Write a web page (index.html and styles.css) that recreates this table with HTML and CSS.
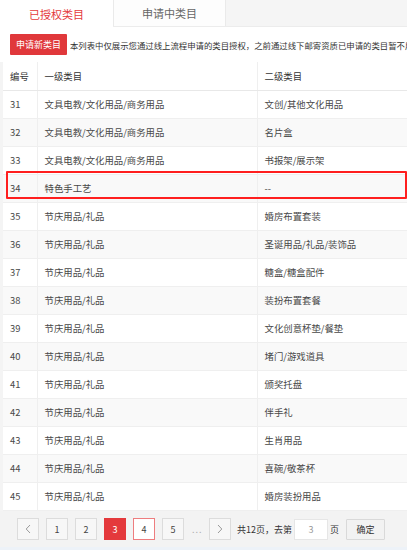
FILE: index.html
```html
<!DOCTYPE html>
<html lang="zh-CN">
<head>
<meta charset="utf-8">
<title>类目管理</title>
<link rel="stylesheet" href="styles.css">
</head>
<body>
<div class="page">
  <div class="tabs">
    <div class="tab tab-active">已授权类目</div>
    <div class="tab">申请中类目</div>
    <div class="tab-fill"></div>
  </div>
  <div class="toolbar">
    <button class="btn-apply">申请新类目</button>
    <p class="notice">本列表中仅展示您通过线上流程申请的类目授权，之前通过线下邮寄资质已申请的类目暂不展示</p>
  </div>
  <div class="table-wrap">
    <table class="cat-table">
      <thead>
        <tr><th class="c-no">编号</th><th class="c-first">一级类目</th><th class="c-second">二级类目</th></tr>
      </thead>
      <tbody>
        <tr><td>31</td><td>文具电教/文化用品/商务用品</td><td>文创/其他文化用品</td></tr>
        <tr><td>32</td><td>文具电教/文化用品/商务用品</td><td>名片盒</td></tr>
        <tr><td>33</td><td>文具电教/文化用品/商务用品</td><td>书报架/展示架</td></tr>
        <tr><td>34</td><td>特色手工艺</td><td>--</td></tr>
        <tr><td>35</td><td>节庆用品/礼品</td><td>婚房布置套装</td></tr>
        <tr><td>36</td><td>节庆用品/礼品</td><td>圣诞用品/礼品/装饰品</td></tr>
        <tr><td>37</td><td>节庆用品/礼品</td><td>糖盒/糖盒配件</td></tr>
        <tr><td>38</td><td>节庆用品/礼品</td><td>装扮布置套餐</td></tr>
        <tr><td>39</td><td>节庆用品/礼品</td><td>文化创意杯垫/餐垫</td></tr>
        <tr><td>40</td><td>节庆用品/礼品</td><td>堵门/游戏道具</td></tr>
        <tr><td>41</td><td>节庆用品/礼品</td><td>颁奖托盘</td></tr>
        <tr><td>42</td><td>节庆用品/礼品</td><td>伴手礼</td></tr>
        <tr><td>43</td><td>节庆用品/礼品</td><td>生肖用品</td></tr>
        <tr><td>44</td><td>节庆用品/礼品</td><td>喜碗/敬茶杯</td></tr>
        <tr><td>45</td><td>节庆用品/礼品</td><td>婚房装扮用品</td></tr>
      </tbody>
    </table>
    <div class="highlight"></div>
  </div>
  <div class="pager">
    <span class="pg-btn pg-arrow"><svg width="6" height="10" viewBox="0 0 6 10"><path d="M5 1 L1.2 5 L5 9" fill="none" stroke="#9a9a9a" stroke-width="1"/></svg></span>
    <span class="pg-btn">1</span>
    <span class="pg-btn">2</span>
    <span class="pg-btn pg-current">3</span>
    <span class="pg-btn pg-next">4</span>
    <span class="pg-btn">5</span>
    <span class="pg-dots">...</span>
    <span class="pg-btn pg-arrow"><svg width="6" height="10" viewBox="0 0 6 10"><path d="M1 1 L4.8 5 L1 9" fill="none" stroke="#9a9a9a" stroke-width="1"/></svg></span>
    <span class="pg-text">共12页，去第</span>
    <span class="pg-input">3</span>
    <span class="pg-text pg-unit">页</span>
    <span class="pg-ok">确定</span>
  </div>
  <div class="bottom-band"></div>
</div>
</body>
</html>
```
FILE: styles.css
```css
* { box-sizing: border-box; }

html, body {
  margin: 0;
  padding: 0;
}

body {
  background: #f4f4f4;
  font-family: "Noto Sans CJK SC", "Noto Sans", sans-serif;
  color: #333;
  width: 407px;
  height: 550px;
  overflow: hidden;
}

.page {
  display: flex;
  flex-direction: column;
  width: 407px;
}

/* Tabs */
.tabs {
  display: flex;
  height: 27px;
  border-bottom: 1px solid #ececec;
  background: #f5f5f5;
}

.tab {
  width: 113px;
  height: 26px;
  display: flex;
  align-items: center;
  justify-content: center;
  font-size: 11px;
  color: #666;
  background: #fdfdfd;
  border-left: 1px solid #eaeaea;
  border-right: 1px solid #eaeaea;
}

.tab-active {
  color: #e4393c;
  background: #fff;
  border-left: none;
  border-right: none;
  height: 27px;
  margin-bottom: -1px;
}

.tab-fill {
  flex: 1;
}

/* Toolbar */
.toolbar {
  display: flex;
  align-items: center;
  gap: 3px;
  height: 35px;
  padding: 0 0 0 10px;
  background: #fff;
}

.btn-apply {
  flex: none;
  width: 57px;
  height: 21px;
  margin: 0;
  padding: 0;
  border: none;
  border-radius: 1px;
  background: #e0383b;
  color: #fff;
  font-family: inherit;
  font-size: 9px;
  line-height: 21px;
}

.notice {
  margin: 0;
  font-size: 8.4px;
  line-height: 12px;
  color: #333;
  white-space: nowrap;
  overflow: hidden;
}

/* Table */
.table-wrap {
  position: relative;
  margin-left: 3px;
  background: #fff;
}

.cat-table {
  width: 100%;
  border-collapse: collapse;
  table-layout: fixed;
  font-size: 9.4px;
}

.cat-table th,
.cat-table td {
  height: 28px;
  padding: 0 0 0 7px;
  text-align: left;
  font-weight: normal;
  white-space: nowrap;
  overflow: hidden;
  border-bottom: 1px solid #efefef;
  border-left: 1px solid #efefef;
  color: #484848;
}

.cat-table th:first-child,
.cat-table td:first-child {
  border-left: none;
}

.cat-table th {
  color: #333;
  background: #fff;
  border-bottom-color: #e8e8e8;
}

.c-no { width: 34px; }
.c-first { width: 220px; }

.cat-table tbody tr:nth-child(even) td {
  background: #f9f9f9;
}

.highlight {
  position: absolute;
  left: 3px;
  top: 109px;
  width: 401px;
  height: 28px;
  border: 2px solid #ff1f1f;
  border-radius: 1px;
  pointer-events: none;
}

/* Pager */
.pager {
  display: flex;
  align-items: center;
  height: 36px;
  padding: 1px 0 0 17px;
  background: #f3f3f3;
  font-size: 9px;
}

.pg-btn {
  width: 22px;
  height: 22px;
  margin-right: 7px;
  display: flex;
  align-items: center;
  justify-content: center;
  border: 1px solid #dcdcdc;
  background: #f7f7f7;
  color: #444;
  font-size: 9px;
}

.pg-current {
  background: #e4393c;
  border-color: #e4393c;
  color: #fff;
}

.pg-next {
  border-color: #ee7d7f;
  background: #fff;
}

.pg-dots {
  width: 18px;
  padding-left: 1px;
  color: #b0b0b0;
  font-size: 9px;
  letter-spacing: 1px;
}

.pg-text {
  margin-left: -1px;
  color: #333;
  white-space: nowrap;
}

.pg-input {
  width: 34px;
  height: 21px;
  margin-left: 2px;
  display: flex;
  align-items: center;
  justify-content: center;
  background: #fff;
  border: 1px solid #e6e6e6;
  color: #999;
}

.pg-unit {
  margin-left: 2px;
}

.pg-ok {
  width: 39px;
  height: 21px;
  margin-left: 7px;
  display: flex;
  align-items: center;
  justify-content: center;
  background: #f2f2f2;
  border: 1px solid #d9d9d9;
  border-radius: 1px;
  color: #333;
}

.bottom-band {
  height: 10px;
  background: #edf2f8;
}
```
